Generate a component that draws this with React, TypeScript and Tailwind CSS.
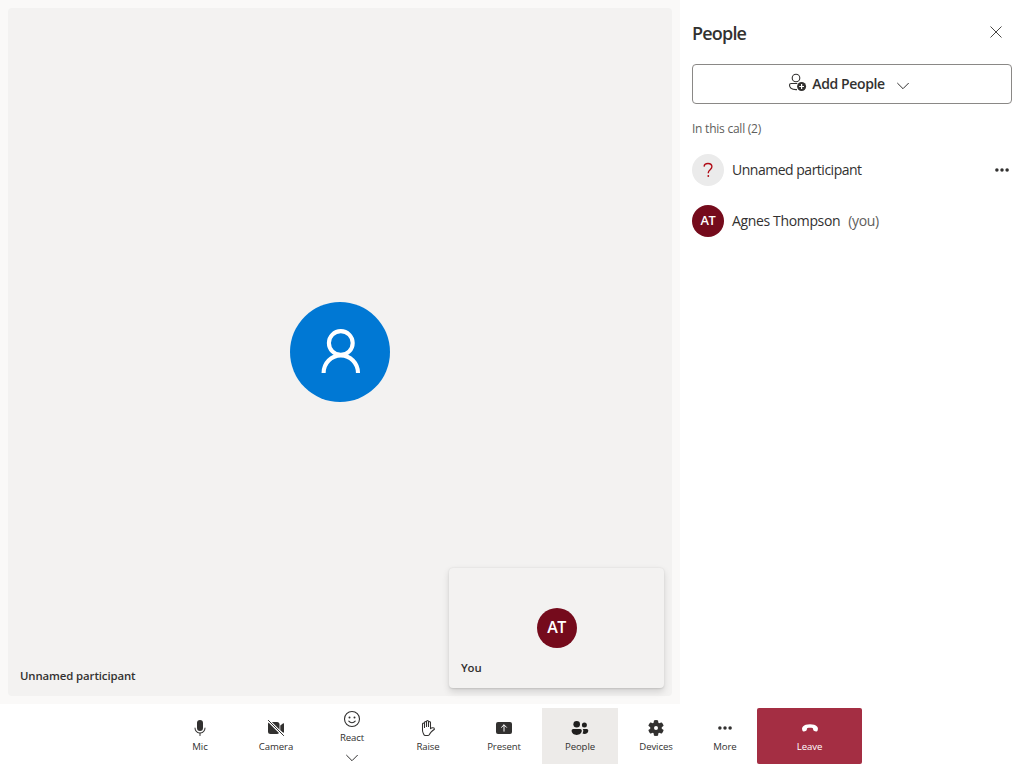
import type { ReactNode } from "react";

const Dots = () => (
  <svg width="20" height="20" viewBox="0 0 20 20" fill="currentColor">
    <circle cx="4.9" cy="10" r="1.75" />
    <circle cx="10" cy="10" r="1.75" />
    <circle cx="15.1" cy="10" r="1.75" />
  </svg>
);

const Chevron = ({ className = "" }: { className?: string }) => (
  <svg className={className} width="12" height="8" viewBox="0 0 12 8" fill="none" stroke="currentColor" strokeWidth="1">
    <path d="M.3 1 6 6.7 11.7 1" />
  </svg>
);

const Mic = () => (
  <svg width="20" height="20" viewBox="0 0 20 20" fill="currentColor">
    <path d="M10 13a3 3 0 0 0 3-3V5a3 3 0 0 0-6 0v5a3 3 0 0 0 3 3ZM5 9.5c.28 0 .5.22.5.5a4.5 4.5 0 1 0 9 0 .5.5 0 0 1 1 0 5.5 5.5 0 0 1-5 5.48v2.02a.5.5 0 0 1-1 0v-2.02A5.5 5.5 0 0 1 4.5 10c0-.28.22-.5.5-.5Z" />
  </svg>
);

const CameraOff = () => (
  <svg width="20" height="20" viewBox="0 0 20 20" fill="currentColor">
    <path d="M4.6 4H11a2.5 2.5 0 0 1 2.5 2.5v6.1Z" />
    <path d="M2.5 4.6 13 15a2.5 2.5 0 0 1-2 1H4.5A2.5 2.5 0 0 1 2 13.500v-7a2.500 2.500 0 0 1 .5-1.900Z" />
    <path d="m14.300 7.400 2.600-2a.7.7 0 0 1 1.100.6v8a.7.7 0 0 1-1.100.6l-2.600-2Z" />
    <path d="m3.200 2.200 15 15" stroke="#fff" strokeWidth="1.200" />
    <path d="m2.400 2.400 15.200 15.200" stroke="currentColor" strokeWidth="1" strokeLinecap="round" />
  </svg>
);

const Smile = () => (
  <svg width="20" height="20" viewBox="0 0 20 20" fill="none" stroke="currentColor" strokeWidth="1.100" strokeLinecap="round">
    <circle cx="10" cy="10" r="7.500" />
    <path d="M6.800 12.200a4.100 4.100 0 0 0 6.400 0" />
    <circle cx="7.500" cy="8.500" r="1" fill="currentColor" stroke="none" />
    <circle cx="12.500" cy="8.500" r="1" fill="currentColor" stroke="none" />
  </svg>
);

const HandIcon = () => (
  <svg width="20" height="20" viewBox="0 0 20 20" fill="none" stroke="currentColor" strokeWidth="1.050" strokeLinecap="round" strokeLinejoin="round">
    <path d="M6.500 9.500v-3.500a1 1 0 0 0-2 0v6c0 1 .2 2 .6 2.900l.6 1.400c.3.750.9 1.200 1.600 1.200h2.500c.6 0 1.150-.3 1.450-.85.500-.85 1.100-1.700 1.800-2.500 1-1.150 2.200-2.100 3.400-2.950-.1-.75-.5-1.200-1.100-1.350-1-.3-2-.05-2.850.8V4.500a1 1 0 0 0-2 0v4" />
    <path d="M6.500 9.500v-5a1 1 0 0 1 2 0v4m0-4v-1a1 1 0 0 1 2 0v5" />
  </svg>
);

const PresentIcon = () => (
  <svg width="20" height="20" viewBox="0 0 20 20">
    <rect x="2" y="4" width="16" height="12" rx="2" fill="currentColor" />
    <path d="M10 13.200V7M7.500 9.300 10 6.800l2.500 2.500" fill="none" stroke="#fff" strokeWidth="1" strokeLinecap="round" strokeLinejoin="round" />
  </svg>
);

const PeopleIcon = () => (
  <svg width="20" height="20" viewBox="0 0 20 20" fill="#201f1e">
    <circle cx="6.700" cy="6.200" r="3.300" />
    <circle cx="14.400" cy="7" r="2.500" />
    <path d="M3.200 11h7a1.600 1.600 0 0 1 1.600 1.600c0 2.800-2.200 4.400-5.100 4.400s-5.100-1.600-5.100-4.400A1.600 1.600 0 0 1 3.200 11Z" />
    <path d="M12.700 11h4.100a1.500 1.500 0 0 1 1.500 1.500c0 2.100-1.600 3.400-3.900 3.400-.7 0-1.300-.1-1.900-.4.500-.8.800-1.800.8-2.900 0-.6-.2-1.200-.6-1.600Z" />
  </svg>
);

const Gear = () => (
  <svg width="20" height="20" viewBox="0 0 20 20" fill="currentColor" fillRule="evenodd">
    <path d="M8.500 2.200a8 8 0 0 1 3 0 .7.7 0 0 1 .6.6l.2 1.500a1.100 1.100 0 0 0 1.500.8l1.400-.6a.7.700 0 0 1 .8.2A8 8 0 0 1 17.500 7.300a.7.7 0 0 1-.2.800l-1.200.9a1.200 1.200 0 0 0 0 1.900l1.200.9a.7.7 0 0 1 .2.8A8 8 0 0 1 16 15.300a.7.7 0 0 1-.8.2l-1.400-.6a1.100 1.100 0 0 0-1.500.8l-.2 1.500a.7.7 0 0 1-.6.6 8 8 0 0 1-3 0 .7.7 0 0 1-.6-.6l-.2-1.500a1.100 1.100 0 0 0-1.500-.8l-1.400.6a.7.7 0 0 1-.8-.2 8 8 0 0 1-1.500-2.700.7.7 0 0 1 .2-.8l1.200-.9a1.200 1.200 0 0 0 0-1.900l-1.200-.9a.7.7 0 0 1-.2-.8A8 8 0 0 1 4 4.700a.7.7 0 0 1 .8-.2l1.400.6a1.100 1.100 0 0 0 1.500-.8l.2-1.500a.7.700 0 0 1 .6-.6ZM10 8a2 2 0 1 0 0 4 2 2 0 0 0 0-4Z" />
  </svg>
);

const HangUp = () => (
  <svg width="20" height="20" viewBox="0 0 20 20" fill="currentColor">
    <path d="M10 6.300c3.200 0 5.700.9 7 2.200.9.9 1.200 2 .8 3.300l-.2.700c-.2.700-.9 1.100-1.600.9l-1.700-.4c-.6-.1-1-.6-1.100-1.200l-.3-1.600c-1.900-.6-3.900-.6-5.800 0l-.3 1.600c-.1.600-.5 1.100-1.100 1.200l-1.700.4c-.7.200-1.400-.2-1.600-.9l-.2-.7c-.4-1.300-.1-2.400.8-3.300 1.300-1.300 3.800-2.200 7-2.200Z" />
  </svg>
);

const AddPerson = () => (
  <svg width="20" height="20" viewBox="0 0 20 20" fill="none" stroke="currentColor" strokeWidth="1.100">
    <circle cx="9" cy="6" r="3.800" />
    <path d="M10.200 11.500H4.200c-1 0-1.700.7-1.700 1.600 0 2.900 2.600 4.500 6.500 4.500h1" />
    <circle cx="14.600" cy="14.500" r="4.500" fill="currentColor" stroke="none" />
    <path d="M14.600 12.100v4.800M12.200 14.500H17" stroke="#fff" strokeWidth="1.200" />
  </svg>
);

type ActionProps = { icon: ReactNode; label: string; className?: string; menu?: boolean };

const Action = ({ icon, label, className = "w-[76px]", menu }: ActionProps) => (
  <button className={`flex h-14 shrink-0 flex-col items-center ${menu ? "pt-px" : "pt-2.5"} ${className}`}>
    {icon}
    <span className="mt-px h-[15px] text-[9.6px] leading-[15px] tracking-[-0.01em] whitespace-nowrap">{label}</span>
    {menu && <Chevron className="mt-[9px] shrink-0" />}
  </button>
);

export default function App() {
  return (
    <div className="flex h-[768px] w-[1024px] flex-col overflow-hidden bg-white font-['Open_Sans','Noto_Sans',sans-serif] text-[#323130]">
      <div className="flex h-[704px]">
        <main className="w-[680px] bg-[#faf9f8] p-2">
          <section className="relative flex h-full items-center justify-center rounded bg-[#f3f2f1]">
            <div className="flex size-[100px] items-center justify-center rounded-full bg-[#0078d4]">
              <svg width="100" height="100" viewBox="0 0 100 100" fill="none" stroke="#fff" strokeWidth="4.100">
                <circle cx="50.800" cy="41" r="11.900" />
                <path d="M33.600 71a17.200 17.600 0 0 1 34.400 0" />
              </svg>
            </div>
            <span className="absolute bottom-3 left-3 text-[11.4px] leading-4 font-semibold tracking-[-0.010em]">Unnamed participant</span>
            <div className="absolute right-2 bottom-2 flex h-[120px] w-[215px] items-center justify-center rounded bg-[#f3f2f1] shadow-[0_3.200px_7.200px_rgba(0,0,0,.13),0_.6px_1.800px_rgba(0,0,0,.11)]">
              <div className="flex size-10 items-center justify-center rounded-full bg-[#750b1c] pb-0.5 text-[16px] leading-5 font-semibold tracking-[-0.04em] text-white">AT</div>
              <span className="absolute bottom-3 left-3 text-[11.4px] leading-4 font-semibold tracking-[-0.012em]">You</span>
            </div>
          </section>
        </main>
        <aside className="flex w-[344px] flex-col px-3">
          <header className="flex h-16 items-center justify-between pr-2.5">
            <h2 className="pt-0.5 text-[18px] leading-6 font-semibold tracking-[-0.045em]">People</h2>
            <svg width="12" height="12" viewBox="0 0 12 12" fill="none" stroke="#484644" strokeWidth="1">
              <path d="m.5.5 11 11m0-11-11 11" />
            </svg>
          </header>
          <button className="flex h-10 items-center rounded border border-[#8a8886] pl-[94px]">
            <span className="-mt-1"><AddPerson /></span>
            <span className="ml-1 w-[75px] text-center text-[14px] leading-5 font-semibold tracking-[-0.027em] whitespace-nowrap">Add People</span>
            <Chevron className="mt-1 ml-[11px]" />
          </button>
          <p className="mt-[17px] text-[12px] leading-4 tracking-[-0.02em] text-[#605e5c]">In this call (2)</p>
          <div className="mt-[7px] flex h-[51px] items-center">
            <span className="flex size-8 items-center justify-center rounded-full bg-[#ebebeb]">
              <svg width="12" height="16" viewBox="0 0 12 16" fill="none" stroke="#b00b16" strokeWidth="1.350">
                <path d="M2.100 4.600C2.200 2.600 3.700 1.500 6 1.500s3.900 1.200 3.900 3.300c0 2.700-3.600 3.100-3.600 6v.5" />
                <circle cx="6.300" cy="14" r=".9" fill="#b00b16" stroke="none" />
              </svg>
            </span>
            <span className="ml-2 text-[14px] leading-5 tracking-[-0.035em]">Unnamed participant</span>
            <span className="ml-auto"><Dots /></span>
          </div>
          <div className="flex h-[51px] items-center">
            <span className="flex size-8 items-center justify-center rounded-full bg-[#750b1c] text-[12.8px] font-semibold tracking-[-0.02em] text-white">AT</span>
            <span className="ml-2 text-[14px] leading-5 tracking-[-0.025em]">Agnes Thompson</span>
            <span className="ml-2 text-[14px] leading-5 tracking-[-0.025em] text-[#605e5c]">(you)</span>
          </div>
        </aside>
      </div>
      <footer className="flex h-16 justify-center pt-1">
        <Action icon={<Mic />} label="Mic" />
        <Action icon={<CameraOff />} label="Camera" />
        <Action icon={<Smile />} label="React" menu />
        <Action icon={<HandIcon />} label="Raise" />
        <Action icon={<PresentIcon />} label="Present" />
        <Action icon={<PeopleIcon />} label="People" className="w-[76px] bg-[#edebe9]" />
        <Action icon={<Gear />} label="Devices" />
        <Action icon={<Dots />} label="More" className="w-[63px] pr-px" />
        <Action icon={<HangUp />} label="Leave" className="w-[105px] rounded-[2px] bg-[#a42e43] text-white" />
      </footer>
    </div>
  );
}
